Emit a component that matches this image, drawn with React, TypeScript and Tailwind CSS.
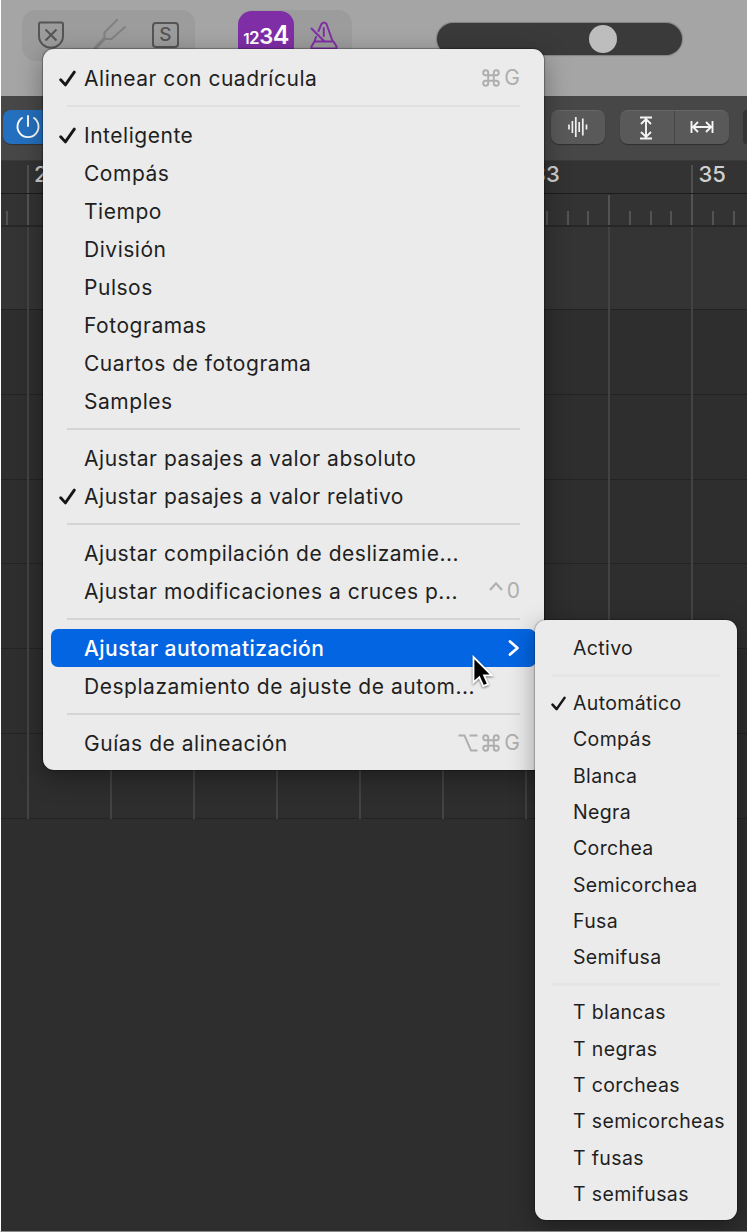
import clsx from "clsx"

type Entry = { label: string; checked?: boolean; keys?: string[]; active?: boolean } | "separator"

const MENU: Entry[] = [
  { label: "Alinear con cuadrícula", checked: true, keys: ["cmd", "G"] },
  "separator",
  { label: "Inteligente", checked: true },
  { label: "Compás" },
  { label: "Tiempo" },
  { label: "División" },
  { label: "Pulsos" },
  { label: "Fotogramas" },
  { label: "Cuartos de fotograma" },
  { label: "Samples" },
  "separator",
  { label: "Ajustar pasajes a valor absoluto" },
  { label: "Ajustar pasajes a valor relativo", checked: true },
  "separator",
  { label: "Ajustar compilación de deslizamie..." },
  { label: "Ajustar modificaciones a cruces p...", keys: ["ctrl", "0"] },
  "separator",
  { label: "Ajustar automatización", active: true },
  { label: "Desplazamiento de ajuste de autom..." },
  "separator",
  { label: "Guías de alineación", keys: ["opt", "cmd", "G"] },
]

const SUBMENU: Entry[] = [
  { label: "Activo" },
  "separator",
  { label: "Automático", checked: true },
  { label: "Compás" },
  { label: "Blanca" },
  { label: "Negra" },
  { label: "Corchea" },
  { label: "Semicorchea" },
  { label: "Fusa" },
  { label: "Semifusa" },
  "separator",
  { label: "T blancas" },
  { label: "T negras" },
  { label: "T corcheas" },
  { label: "T semicorcheas" },
  { label: "T fusas" },
  { label: "T semifusas" },
]

const BARS = ["27", "", "", "33", "35"]
const TRACKS = [0, 1, 2, 3, 4, 5, 6]
const BEATS = [0, 1, 2, 3, 4, 5, 6, 7, 8]

function Check({ className }: { className?: string }) {
  return (
    <svg viewBox="0 0 16 16" className={className} fill="none" stroke="#161616" strokeWidth="2.7" strokeLinecap="round" strokeLinejoin="round">
      <path d="M1.6 9.2 6 14 14.4 2" />
    </svg>
  )
}

function KeyGlyph({ name }: { name: string }) {
  if (name === "cmd") {
    return (
      <svg viewBox="0 0 18 18" className="h-[18px] w-[18px]" fill="none" stroke="currentColor" strokeWidth="1.9">
        <path d="M6.2 6.2H3.6a2.5 2.5 0 1 1 2.6-2.6v10.8a2.5 2.5 0 1 1-2.6-2.6h10.8a2.5 2.5 0 1 1-2.6 2.6V3.6a2.5 2.5 0 1 1 2.6 2.6z" />
      </svg>
    )
  }
  if (name === "opt") {
    return (
      <svg viewBox="0 0 20 18" className="h-[18px] w-5" fill="none" stroke="currentColor" strokeWidth="1.9">
        <path d="M0.5 1.5h6L13 16.5h6.5M11.5 1.5h8" />
      </svg>
    )
  }
  if (name === "ctrl") {
    return (
      <svg viewBox="0 0 14 18" className="h-[18px] w-3.5" fill="none" stroke="currentColor" strokeWidth="2">
        <path d="M1 8 7 1.3l6 6.7" />
      </svg>
    )
  }
  return <span>{name}</span>
}

function MainMenu() {
  return (
    <div className="absolute top-[49px] left-[43px] h-[721px] w-[501px] rounded-[11px] bg-[#ebebeb] px-2 pt-2.5 text-[21px] tracking-[0.53px] text-[#1f1f1f] shadow-[0_0_1px_1px_rgba(0,0,0,0.3),0_8px_26px_rgba(0,0,0,0.35)]">
      {MENU.map((item, i) =>
        item === "separator" ? (
          <div key={i} className="flex h-[19px] items-center px-4">
            <div className={clsx("-mt-px h-0.5 w-full", i === 1 ? "bg-[#e1e1e1]" : "bg-[#d5d5d5]")} />
          </div>
        ) : (
          <div
            key={i}
            className={clsx("flex h-[38px] items-center rounded-[7px] pt-0.5 pr-4 pl-[7px] whitespace-nowrap", item.active && "bg-[#0365e2] font-medium tracking-[0.44px] text-white")}
          >
            <div className="w-[26px] shrink-0">{item.checked && <Check className="-mt-0.5 ml-px h-[17px] w-[17px]" />}</div>
            <span>{item.label}</span>
            {item.keys && (
              <div className="-mt-0.5 ml-auto flex items-center gap-1 tracking-normal text-[#aeaeae]">
                {item.keys.map((k) => (
                  <KeyGlyph key={k} name={k} />
                ))}
              </div>
            )}
            {item.active && (
              <svg viewBox="0 0 12 18" className="-mt-0.5 ml-auto h-[18px] w-3" fill="none" stroke="#fff" strokeWidth="2.8" strokeLinecap="round" strokeLinejoin="round">
                <path d="M2 2.5 9.5 9 2 15.5" />
              </svg>
            )}
          </div>
        ),
      )}
    </div>
  )
}

function SubMenu() {
  return (
    <div className="absolute top-[620px] left-[535px] h-[600px] w-[202px] rounded-[11px] bg-[#ebebeb] pt-[10.3px] text-[19.5px] tracking-[0.36px] text-[#1f1f1f] shadow-[0_0_1px_1px_rgba(0,0,0,0.22),0_8px_26px_rgba(0,0,0,0.35)]">
      {SUBMENU.map((item, i) =>
        item === "separator" ? (
          <div key={i} className="flex h-[18.7px] items-center px-[17px]">
            <div className="-mt-px h-[3px] w-full bg-[#e5e5e5]" />
          </div>
        ) : (
          <div key={i} className="flex h-[36.35px] items-center pl-4 whitespace-nowrap">
            <div className="w-[22px] shrink-0">{item.checked && <Check className="h-[15px] w-[15px]" />}</div>
            <span>{item.label}</span>
          </div>
        ),
      )}
    </div>
  )
}

function TopBar() {
  return (
    <div className="flex h-24 items-start bg-[#a5a5a5] pl-[21px]">
      <div className="mt-2.5 flex h-[51px] w-[173px] rounded-[14px] bg-[#9c9c9c] pt-[11px] pl-[15px] text-[#555]">
        <svg viewBox="0 0 28 28" className="h-7 w-7" fill="none" stroke="currentColor" strokeWidth="2">
          <path d="M3.500 1.500h21q1.500 0 1.500 1.500v12c0 7-6 11.800-12 11.800S2 22 2 15V3q0-1.500 1.500-1.500z" />
          <path d="m8.500 8.500 11 11m0-11-11 11" />
        </svg>
        <svg viewBox="0 0 32 32" className="-mt-1 ml-[29px] h-8 w-8 text-[#828282]" fill="none" stroke="currentColor" strokeWidth="2.200" strokeLinecap="round" strokeLinejoin="round">
          <path d="M23 3 10.500 15.500v6.500h7L31 10" />
          <path d="M10 22 1.500 31" strokeWidth="3.400" />
        </svg>
        <div className="mt-px ml-[26px] flex h-[26px] w-[27px] items-center justify-center rounded-[4px] border-2 border-[#555] text-[19px] font-medium">S</div>
      </div>
      <div className="mt-2.5 ml-[43px] flex h-[51px] w-[114px] rounded-[14px] bg-[#9c9c9c]">
        <div className="mt-px flex h-[50px] w-[56px] items-baseline justify-center rounded-[14px] bg-[#7f2ea6] pt-[6px] font-semibold tracking-[-0.5px] text-white">
          <span className="text-[15px]">1</span>
          <span className="text-[17px]">2</span>
          <span className="text-[22px]">3</span>
          <span className="text-[25px]">4</span>
        </div>
        <svg viewBox="0 0 28 28" className="mt-[11px] ml-4 h-7 w-7" fill="none" stroke="#812fa6" strokeWidth="2" strokeLinecap="round" strokeLinejoin="round">
          <path d="M8.500 10 11.500 3Q14 0 16.500 3L22.500 20M6 16 4.500 20.500h19l3 5q.5 2-1 2h-23q-1.500 0-1-2l3-5M13.800 7v8M1.500 7.500 14 20" />
        </svg>
      </div>
      <div className="mt-[23px] ml-[85px] flex h-8 w-[245px] items-center rounded-full bg-[#3a3a3a] pl-[152px] shadow-[0_0_1px_1px_rgba(80,80,80,0.4)]">
        <div className="h-7 w-7 rounded-full bg-[#bdbdbd]" />
      </div>
    </div>
  )
}

function ToolBar() {
  return (
    <div className="flex h-16 items-start bg-[#474747] pt-3.5 pl-0.5">
      <div className="flex h-[34px] w-[60px] items-center rounded-[8px] bg-[#2470bf] pl-[13px] shadow-[0_1px_1px_rgba(0,0,0,0.3)]">
        <svg viewBox="0 0 24 24" className="h-6 w-6" fill="none" stroke="#fff" strokeWidth="1.9" strokeLinecap="round">
          <path d="M6 3a10.500 10.500 0 1 0 12 0M12 1v10" />
        </svg>
      </div>
      <div className="ml-[488px] flex h-[34px] w-[54px] items-center justify-center rounded-[8px] border-t border-[#666] bg-[#595959] shadow-[0_1px_1px_rgba(0,0,0,0.35)]">
        <svg viewBox="0 0 20 22" className="-mt-0.5 h-[22px] w-5" fill="none" stroke="#f0f0f0" strokeWidth="1.700">
          <path d="M1 8.500v5M4.400 5v12M7.800 1v20M11.200 6v10M14.800 2.500v17M18.500 8.500v5" />
        </svg>
      </div>
      <div className="ml-[15px] flex h-[34px] w-[110px] rounded-[8px] border-t border-[#666] bg-[#595959] shadow-[0_1px_1px_rgba(0,0,0,0.35)]">
        <div className="flex flex-1 items-center justify-center border-r border-[#454545]">
          <svg viewBox="0 0 14 24" className="mr-px h-6 w-3.5" fill="none" stroke="#f5f5f5" strokeWidth="1.9">
            <path d="M1 1.500h12M1 22.500h12M7 3v18M2 8l5-5 5 5M2 16l5 5 5-5" />
          </svg>
        </div>
        <div className="flex flex-1 items-center justify-center">
          <svg viewBox="0 0 24 14" className="-mt-0.5 h-3.5 w-6" fill="none" stroke="#f5f5f5" strokeWidth="1.9">
            <path d="M1.500 1v12M22.500 1v12M3 7h18M8 2 3 7l5 5M16 2l5 5-5 5" />
          </svg>
        </div>
      </div>
      <div className="ml-3.5 h-[34px] w-[4px] rounded-l-[6px] bg-[#353535]" />
    </div>
  )
}

function Ruler() {
  return (
    <div className="h-[67px] bg-[#333] text-[22px] font-medium text-[#d0d0d0]">
      <div className="flex h-[34px] overflow-hidden border-t border-b border-t-[#3a3a3a] border-b-[#1c1c1c] pl-[26px]">
        {BARS.map((bar, i) => (
          <div key={i} className="mt-1 h-[30px] w-[166.1px] shrink-0 border-l-2 border-[#4f4f4f] pl-[5px] leading-[19px]">
            {bar}
          </div>
        ))}
      </div>
      <div className="flex h-[33px] items-end overflow-hidden border-b-2 border-[#272727] pl-[5.3px]">
        {Array.from({ length: 36 }, (_, i) => (
          <div key={i} className={clsx("w-[20.76px] shrink-0 border-l-2 border-[#535353]", i % 4 === 1 ? (i % 8 === 1 ? "h-full" : "h-[30px]") : "h-3.5")} />
        ))}
      </div>
    </div>
  )
}

function Tracks() {
  return (
    <div className="relative h-[592px]">
      {TRACKS.map((t) => (
        <div key={t} className={clsx("border-b border-[#232323]", t === 0 ? "h-[83px] bg-[#343434]" : "h-[84.8px] bg-[#2e2e2e]")} />
      ))}
      <div className="absolute inset-0 flex overflow-hidden pl-[26px]">
        {BEATS.map((b) => (
          <div key={b} className="w-[83.05px] shrink-0 border-l-2 border-[#434343]" />
        ))}
      </div>
    </div>
  )
}

export default function App() {
  return (
    <div className="relative h-[1232px] w-[747px] overflow-hidden border-b border-l border-b-[#8c8888] border-l-white bg-[#2e2e2e] font-['Inter',sans-serif]">
      <TopBar />
      <ToolBar />
      <Ruler />
      <Tracks />
      <div className="absolute inset-y-0 right-0 -left-px">
        <MainMenu />
        <SubMenu />
        <svg viewBox="0 0 24 34" className="absolute top-[655px] left-[471px] h-[34px] w-6 drop-shadow-[0_1px_1px_rgba(0,0,0,0.5)]">
          <path d="M2.500 2v25.500l5.800-5.300 4 9 4.700-2-4-8.800h7.800z" fill="#000" stroke="#fff" strokeWidth="1.800" />
        </svg>
      </div>
    </div>
  )
}
